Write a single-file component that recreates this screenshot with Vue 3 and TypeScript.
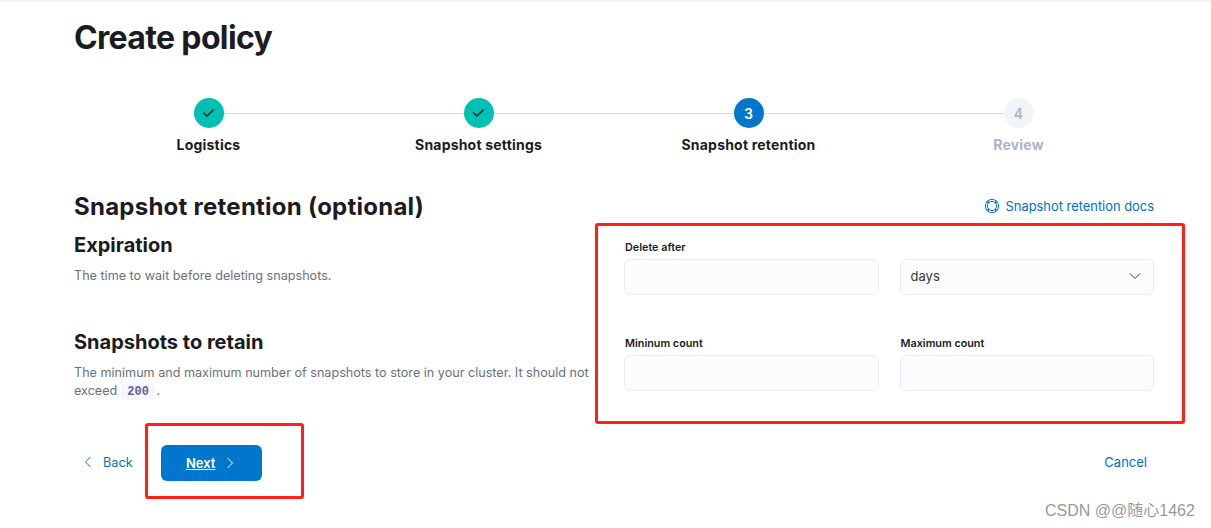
<script setup lang="ts">
interface Step {
  label: string
  state: 'done' | 'current' | 'todo'
  num: number
}

const steps: Step[] = [
  { label: 'Logistics', state: 'done', num: 1 },
  { label: 'Snapshot settings', state: 'done', num: 2 },
  { label: 'Snapshot retention', state: 'current', num: 3 },
  { label: 'Review', state: 'todo', num: 4 },
]
</script>

<template>
  <div class="page">
    <h1 class="title">Create policy</h1>

    <ol class="steps">
      <li v-for="s in steps" :key="s.label" class="step" :class="s.state">
        <span class="dot">
          <svg v-if="s.state === 'done'" width="16" height="16" viewBox="0 0 16 16" fill="none">
            <path d="M2.2 7.4 6 11 12.6 4.6" stroke="#1a1c21" stroke-width="1.4" />
          </svg>
          <template v-else>{{ s.num }}</template>
        </span>
        <span class="step-label">{{ s.label }}</span>
      </li>
    </ol>

    <div class="head">
      <h2 class="section-title">Snapshot retention (optional)</h2>
      <a class="docs">
        <svg width="16" height="16" viewBox="0 0 16 16" fill="none" stroke="#0071c2" stroke-width="1">
          <circle cx="8" cy="8" r="6.6" />
          <circle cx="8" cy="8" r="4.6" />
          <path d="M4.9 4.9 3 3M11.1 4.9 13 3M4.9 11.1 3 13M11.1 11.1 13 13" stroke-width="1.6" />
        </svg>
        Snapshot retention docs
      </a>
    </div>

    <div class="body">
      <div class="copy">
        <section class="block">
          <h3 class="block-title">Expiration</h3>
          <p class="block-text">The time to wait before deleting snapshots.</p>
        </section>
        <section class="block">
          <h3 class="block-title">Snapshots to retain</h3>
          <p class="block-text">
            The minimum and maximum number of snapshots to store in your cluster. It should not
            exceed <code class="code">200</code>.
          </p>
        </section>
      </div>

      <div class="form">
        <div class="row">
          <label class="field">
            <span class="field-label">Delete after</span>
            <input class="input" />
          </label>
          <div class="field no-label">
            <div class="input select">
              <span>days</span>
              <svg width="16" height="16" viewBox="0 0 16 16" fill="none">
                <path d="M3 5.5 8 10.5 13 5.5" stroke="#343741" stroke-width="1" />
              </svg>
            </div>
          </div>
        </div>
        <div class="row">
          <label class="field">
            <span class="field-label">Mininum count</span>
            <input class="input" />
          </label>
          <label class="field">
            <span class="field-label">Maximum count</span>
            <input class="input" />
          </label>
        </div>
      </div>
    </div>

    <div class="footer">
      <div class="footer-left">
        <a class="back">
          <svg width="12" height="14" viewBox="0 0 12 14" fill="none">
            <path d="M8.5 2 3.5 7 8.5 12" stroke="#0071c2" stroke-width="1" />
          </svg>
          Back
        </a>
        <button class="next">
          <span class="next-text">Next</span>
          <svg width="12" height="14" viewBox="0 0 12 14" fill="none">
            <path d="M3.5 2 8.5 7 3.5 12" stroke="#fff" stroke-width="1" />
          </svg>
        </button>
      </div>
      <a class="cancel">Cancel</a>
    </div>

    <!-- annotations drawn on top of the screenshot -->
    <div class="mark mark-form"></div>
    <div class="mark mark-next"></div>
    <div class="watermark">CSDN @@随心1462</div>
  </div>
</template>

<style>
html,
body {
  margin: 0;
  background: #fff;
}
</style>

<style scoped>
.page {
  position: relative;
  box-sizing: border-box;
  width: 1211px;
  height: 528px;
  padding: 0 57px 0 74px;
  overflow: hidden;
  font-family: Inter, "Noto Sans CJK SC", sans-serif;
  color: #1a1c21;
  background: #fff;
  box-shadow: inset 0 2px 2px -1px rgba(0, 0, 0, 0.08);
}

.title {
  margin: 0;
  padding-top: 18px;
  font-size: 32px;
  line-height: 40px;
  font-weight: 700;
  letter-spacing: -0.65px;
}

.steps {
  display: grid;
  grid-template-columns: repeat(4, 270px);
  list-style: none;
  margin: 40px 0 0;
  padding: 0;
  margin-left: -0.5px;
}

.step {
  position: relative;
  display: flex;
  flex-direction: column;
  align-items: center;
}

.step:not(:last-child)::after {
  content: "";
  position: absolute;
  top: 15px;
  left: 50%;
  width: 100%;
  height: 1px;
  background: #d3dae6;
}

.dot {
  position: relative;
  z-index: 1;
  display: flex;
  align-items: center;
  justify-content: center;
  width: 30px;
  height: 30px;
  border-radius: 50%;
  font-size: 14px;
  font-weight: 600;
}

.done .dot {
  background: #00bfb3;
}

.current .dot {
  background: #0077cc;
  color: #fff;
}

.todo .dot {
  background: #f1f4f8;
  color: #abb4c4;
}

.step-label {
  margin-top: 7px;
  font-size: 14px;
  line-height: 20px;
  font-weight: 700;
  letter-spacing: 0.2px;
}

.todo .step-label {
  color: #abb4c4;
}

.head {
  display: flex;
  justify-content: space-between;
  align-items: center;
  margin-top: 36px;
  height: 32px;
}

.section-title {
  margin: 0;
  font-size: 24px;
  line-height: 32px;
  font-weight: 700;
  letter-spacing: 0.25px;
}

.docs {
  display: flex;
  align-items: center;
  gap: 6px;
  font-size: 12.9px;
  color: #0071c2;
  margin-top: -2px;
}

.body {
  display: flex;
  justify-content: space-between;
}

.copy {
  width: 520px;
}

.block {
  height: 97px;
}

.block-title {
  margin: 0;
  padding-top: 10px;
  font-size: 20px;
  line-height: 24px;
  font-weight: 700;
}

.block-text {
  margin: 9.5px 0 0;
  font-size: 12.62px;
  line-height: 18px;
  color: #69707d;
}

.code {
  display: inline-block;
  margin: 0 1px 0 0;
  padding: 0 6.5px;
  font-family: "Liberation Mono", monospace;
  font-size: 12px;
  line-height: 16px;
  font-weight: 700;
  color: #6d5a9c;
  background: #f5f7fa;
  border-radius: 3px;
}

.form {
  width: 530px;
  padding-top: 16px;
}

.row {
  display: flex;
  gap: 21px;
  height: 96px;
}

.field {
  display: flex;
  flex-direction: column;
  width: 254.5px;
}

.field-label {
  box-sizing: border-box;
  height: 20px;
  padding: 1px 0 0 1px;
  font-size: 10.8px;
  line-height: 16px;
  font-weight: 600;
}

.no-label {
  padding-top: 20px;
  box-sizing: border-box;
}

.input {
  box-sizing: border-box;
  width: 100%;
  height: 36px;
  margin: 0;
  padding: 0 10px;
  font: inherit;
  background: #fbfcfd;
  border: 1px solid #e9edf3;
  border-radius: 6px;
  outline: none;
}

.select {
  display: flex;
  align-items: center;
  justify-content: space-between;
  padding-bottom: 2px;
  font-size: 13px;
  color: #343741;
}

.footer {
  display: flex;
  align-items: center;
  justify-content: space-between;
  margin-top: 14px;
  height: 36px;
  padding-right: 7px;
}

.footer-left {
  display: flex;
  align-items: center;
}

.back {
  display: flex;
  align-items: center;
  gap: 9px;
  margin-left: 8px;
  padding-bottom: 2px;
  font-size: 12.7px;
  color: #0071c2;
}

.next {
  display: flex;
  align-items: center;
  justify-content: center;
  gap: 9px;
  width: 101px;
  height: 36px;
  margin-left: 28px;
  padding: 0;
  border: 0;
  border-radius: 6px;
  background: #0077cc;
  color: #fff;
  font: inherit;
  font-size: 13px;
  font-weight: 600;
}

.next-text {
  text-decoration: underline;
}

.cancel {
  padding-bottom: 2px;
  font-size: 13px;
  color: #0071c2;
}

.mark {
  position: absolute;
  box-sizing: border-box;
  border: 3px solid #ff2016;
  border-radius: 3px;
}

.mark-form {
  left: 595px;
  top: 223px;
  width: 590px;
  height: 201px;
}

.mark-next {
  left: 145px;
  top: 423px;
  width: 159px;
  height: 76px;
}

.watermark {
  position: absolute;
  left: 1045px;
  top: 501px;
  font-family: "Liberation Sans", "Noto Sans CJK SC", sans-serif;
  font-size: 16px;
  line-height: 20px;
  color: rgba(90, 90, 90, 0.65);
  white-space: nowrap;
}
</style>
